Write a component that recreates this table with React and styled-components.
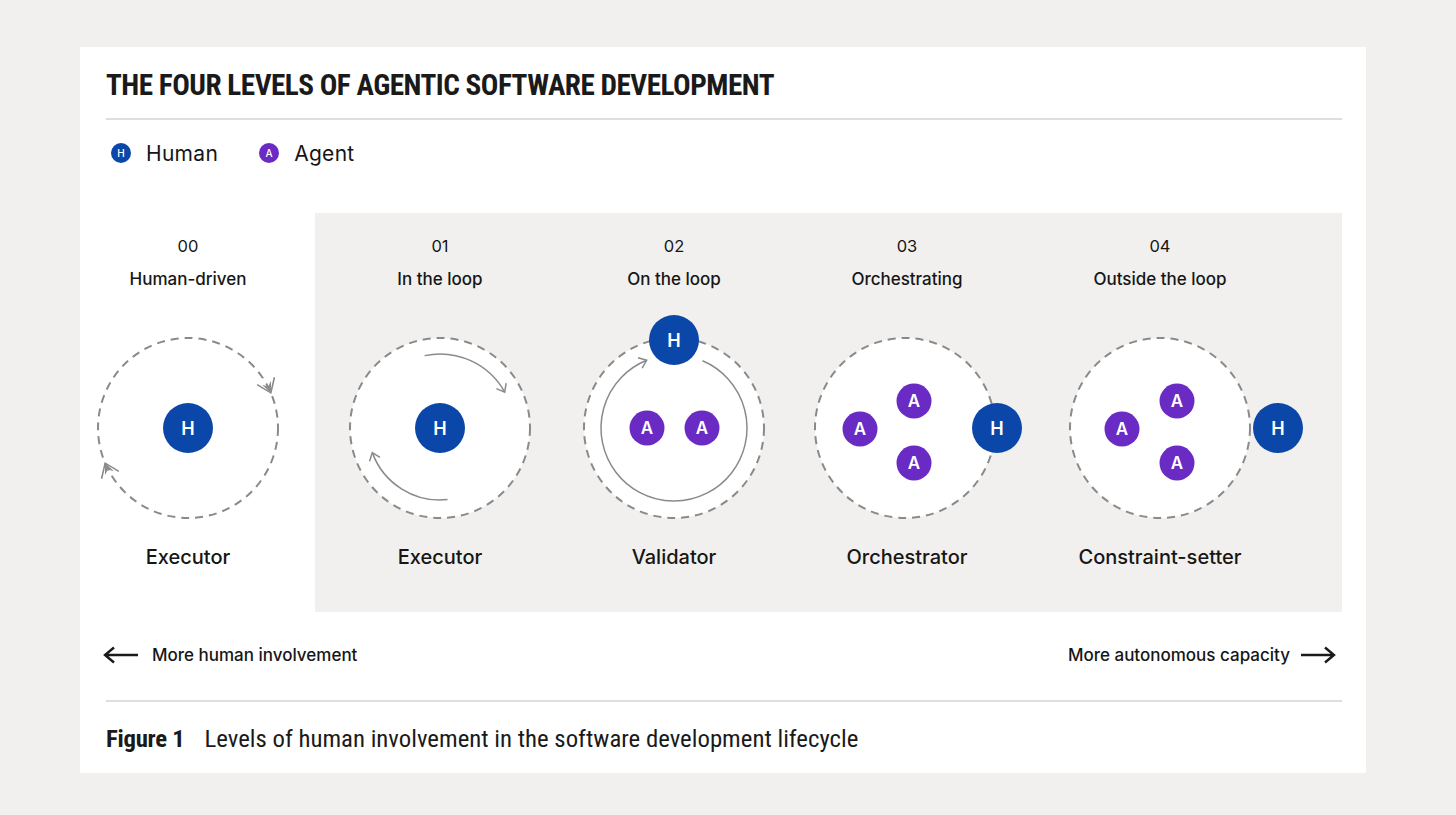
import React from "react";
import styled, { createGlobalStyle } from "styled-components";

const BLUE = "#0a47a9";
const PURPLE = "#6a2ac4";
const LINE = "#8a8a8a";
const CONDENSED = `"Roboto Condensed", "DejaVu Sans Condensed", "Liberation Sans Narrow", Roboto, sans-serif`;

const GlobalStyle = createGlobalStyle`
  html, body { margin: 0; padding: 0; background: #f1f0ee; }
  body { font-family: Inter, "Noto Sans", sans-serif; color: #161616; }
`;

const Page = styled.div`
  padding: 47px 0 0 80px;
  min-height: 815px;
  box-sizing: border-box;
`;

const Card = styled.div`
  width: 1286px;
  height: 726px;
  box-sizing: border-box;
  background: #fff;
  padding: 20px 24px 0 26px;
  display: flex;
  flex-direction: column;
`;

const Title = styled.h1`
  margin: 0;
  font-family: ${CONDENSED};
  font-stretch: 75%;
  font-weight: 700;
  font-size: 29.2px;
  line-height: 36px;
  letter-spacing: -0.5px;
  color: #1a1a1a;
`;

const Divider = styled.div`
  height: 2px;
  background: #dedede;
  margin-top: ${(p) => p.$top}px;
`;

const Legend = styled.div`
  display: flex;
  align-items: center;
  gap: 36px;
  height: 30px;
  margin-top: 18px;
`;

const LegendItem = styled.div`
  display: flex;
  align-items: center;
  gap: 15px;
  font-size: 21px;
  font-weight: 400;
  letter-spacing: 0.3px;
`;

const Dot = styled.span`
  width: 20px;
  height: 20px;
  border-radius: 50%;
  background: ${(p) => p.$color};
  color: #fff;
  font-size: 10px;
  font-weight: 500;
  letter-spacing: 0;
  display: flex;
  align-items: center;
  justify-content: center;
  margin-left: 5px;
`;

const Stage = styled.div`
  display: flex;
  height: 399px;
  margin-top: 45px;
`;

const Panel = styled.div`
  flex: 1;
  display: flex;
  background: #f1f0ee;
`;

const Column = styled.div`
  width: ${(p) => p.$width}px;
  box-sizing: border-box;
  padding-top: 23px;
  padding-right: ${(p) => p.$padRight || 0}px;
  display: flex;
  flex-direction: column;
  align-items: center;
  flex-shrink: 0;
`;

const Num = styled.div`
  font-size: 16.5px;
  font-weight: 400;
  line-height: 20px;
  white-space: nowrap;
`;

const Label = styled.div`
  margin-top: 13px;
  font-size: 17px;
  font-weight: 500;
  line-height: 20px;
  white-space: nowrap;
`;

const Diagram = styled.svg`
  display: block;
  flex-shrink: 0;
  margin-top: 24px;
  overflow: visible;
`;

const Role = styled.div`
  margin-top: 2px;
  font-size: 20px;
  font-weight: 500;
  line-height: 24px;
  white-space: nowrap;
`;

const Directions = styled.div`
  display: flex;
  justify-content: space-between;
  align-items: center;
  height: 24px;
  margin-top: 31px;
  margin-left: -3px;
  margin-right: 6px;
`;

const Direction = styled.div`
  display: flex;
  align-items: center;
  gap: ${(p) => p.$gap}px;
  font-size: 17px;
  font-weight: 500;
`;

const Caption = styled.div`
  display: flex;
  align-items: baseline;
  gap: 20px;
  margin-top: 21px;
  font-family: ${CONDENSED};
  font-stretch: 75%;
  font-size: 24.8px;
  line-height: 32px;
  color: #1a1a1a;
`;

const FigureLabel = styled.span`
  font-weight: 700;
  letter-spacing: -0.3px;
`;

const CaptionText = styled.span`
  font-weight: 400;
`;

/* ---------- SVG helpers ---------- */
const W = 300;
const H = 230;
const CX = 150;
const CY = 115;
const rad = (d) => (d * Math.PI) / 180;
const pt = (cx, cy, r, deg) => [cx + r * Math.cos(rad(deg)), cy + r * Math.sin(rad(deg))];

const arcPath = (cx, cy, r, a0, a1) => {
  const [x0, y0] = pt(cx, cy, r, a0);
  const [x1, y1] = pt(cx, cy, r, a1);
  const large = a1 - a0 > 180 ? 1 : 0;
  return `M${x0.toFixed(2)} ${y0.toFixed(2)} A${r} ${r} 0 ${large} 1 ${x1.toFixed(2)} ${y1.toFixed(2)}`;
};

const chevron = (cx, cy, r, a, len = 9, spread = 38) => {
  const [tx, ty] = pt(cx, cy, r, a);
  const back = a + 90 + 180;
  const [x1, y1] = [tx + len * Math.cos(rad(back + spread)), ty + len * Math.sin(rad(back + spread))];
  const [x2, y2] = [tx + len * Math.cos(rad(back - spread)), ty + len * Math.sin(rad(back - spread))];
  return `M${x1.toFixed(2)} ${y1.toFixed(2)} L${tx.toFixed(2)} ${ty.toFixed(2)} L${x2.toFixed(2)} ${y2.toFixed(2)}`;
};

const Barb = ({ a }) => {
  const [tx, ty] = pt(CX, CY, 90, a);
  const back = a + 90 + 180;
  const p = (ang, l) => [tx + l * Math.cos(rad(ang)), ty + l * Math.sin(rad(ang))];
  const [ax, ay] = p(back + 36, 16);
  const [bx, by] = p(back - 36, 16);
  const [fx1, fy1] = p(back + 24, 12);
  const [fx2, fy2] = p(back - 24, 12);
  const [mx, my] = p(back, 7);
  return (
    <g>
      <path d={`M${ax} ${ay} L${tx} ${ty} L${bx} ${by}`} fill="none" stroke={LINE} strokeWidth="1.6" />
      <path d={`M${tx} ${ty} L${fx1} ${fy1} L${mx} ${my} L${fx2} ${fy2} Z`} fill={LINE} />
    </g>
  );
};

const Node = ({ x, y, kind }) => {
  const big = kind === "H";
  return (
    <g>
      <circle cx={x} cy={y} r={big ? 25 : 17.5} fill={big ? BLUE : PURPLE} />
      <text
        x={x}
        y={y + (big ? 6.5 : 6)}
        textAnchor="middle"
        fill="#fff"
        fontFamily="Inter, 'Noto Sans', sans-serif"
        fontWeight="600"
        fontSize={big ? 18 : 17}
      >
        {kind}
      </text>
    </g>
  );
};

const Dashed = ({ cx = CX }) => (
  <circle cx={cx} cy={CY} r="90" fill="#fff" stroke={LINE} strokeWidth="2" strokeDasharray="8 6" />
);

const Frame = ({ children }) => (
  <Diagram width={W} height={H} viewBox={`0 0 ${W} ${H}`}>
    {children}
  </Diagram>
);

const HumanDriven = () => (
  <Frame>
    <Dashed />
    <Barb a={-23} />
    <Barb a={157} />
    <Node x={CX} y={CY} kind="H" />
  </Frame>
);

const InTheLoop = () => (
  <Frame>
    <Dashed />
    <g fill="none" stroke={LINE} strokeWidth="1.5">
      <path d={arcPath(CX, CY, 74, -102, -29)} />
      <path d={chevron(CX, CY, 74, -29)} />
      <path d={arcPath(CX, CY, 72, 84, 160)} />
      <path d={chevron(CX, CY, 72, 160)} />
    </g>
    <Node x={CX} y={CY} kind="H" />
  </Frame>
);

const OnTheLoop = () => (
  <Frame>
    <Dashed />
    <g fill="none" stroke={LINE} strokeWidth="1.5">
      <path d={arcPath(CX, CY, 73, -67, 248)} />
      <path d={chevron(CX, CY, 73, 248)} />
    </g>
    <Node x={CX} y={CY - 88} kind="H" />
    <Node x={CX - 27} y={CY} kind="A" />
    <Node x={CX + 28} y={CY} kind="A" />
  </Frame>
);

const Orchestrating = () => (
  <Frame>
    <Dashed cx={CX - 2} />
    <Node x={CX - 47} y={CY + 1} kind="A" />
    <Node x={CX + 7} y={CY - 27} kind="A" />
    <Node x={CX + 7} y={CY + 35} kind="A" />
    <Node x={CX + 90} y={CY} kind="H" />
  </Frame>
);

const OutsideTheLoop = () => (
  <Frame>
    <Dashed />
    <Node x={CX - 38} y={CY + 1} kind="A" />
    <Node x={CX + 17} y={CY - 27} kind="A" />
    <Node x={CX + 17} y={CY + 35} kind="A" />
    <Node x={CX + 118} y={CY} kind="H" />
  </Frame>
);

const Arrow = ({ dir }) => (
  <svg width="36" height="18" viewBox="0 0 36 18">
    {dir === "left" ? (
      <path d="M35 9 H2.5 M11 1.5 L2 9 L11 16.5" fill="none" stroke="#1a1a1a" strokeWidth="2.4" />
    ) : (
      <path d="M1 9 H33.5 M25 1.5 L34 9 L25 16.5" fill="none" stroke="#1a1a1a" strokeWidth="2.4" />
    )}
  </svg>
);

const stages = [
  { num: "01", label: "In the loop", role: "Executor", width: 250, D: InTheLoop },
  { num: "02", label: "On the loop", role: "Validator", width: 218, D: OnTheLoop },
  { num: "03", label: "Orchestrating", role: "Orchestrator", width: 248, D: Orchestrating },
  { num: "04", label: "Outside the loop", role: "Constraint-setter", width: 258, D: OutsideTheLoop },
];

export default function App() {
  return (
    <>
      <GlobalStyle />
      <Page>
        <Card>
          <Title>THE FOUR LEVELS OF AGENTIC SOFTWARE DEVELOPMENT</Title>
          <Divider $top={15} />
          <Legend>
            <LegendItem>
              <Dot $color={BLUE}>H</Dot>
              Human
            </LegendItem>
            <LegendItem>
              <Dot $color={PURPLE}>A</Dot>
              Agent
            </LegendItem>
          </Legend>
          <Stage>
            <Column $width={209} $padRight={45}>
              <Num>00</Num>
              <Label>Human-driven</Label>
              <HumanDriven />
              <Role>Executor</Role>
            </Column>
            <Panel>
              {stages.map(({ num, label, role, width, D }) => (
                <Column key={num} $width={width}>
                  <Num>{num}</Num>
                  <Label>{label}</Label>
                  <D />
                  <Role>{role}</Role>
                </Column>
              ))}
            </Panel>
          </Stage>
          <Directions>
            <Direction $gap={13}>
              <Arrow dir="left" />
              More human involvement
            </Direction>
            <Direction $gap={10}>
              More autonomous capacity
              <Arrow dir="right" />
            </Direction>
          </Directions>
          <Divider $top={33} />
          <Caption>
            <FigureLabel>Figure 1</FigureLabel>
            <CaptionText>Levels of human involvement in the software development lifecycle</CaptionText>
          </Caption>
        </Card>
      </Page>
    </>
  );
}
